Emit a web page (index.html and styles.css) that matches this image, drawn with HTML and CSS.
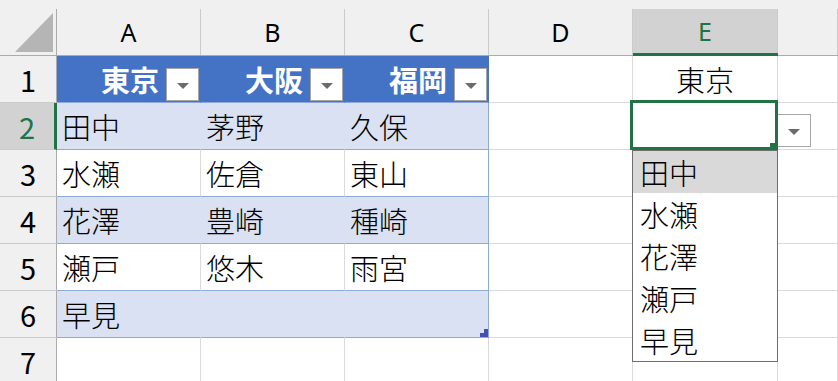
FILE: index.html
```html
<!DOCTYPE html>
<html lang="ja">
<head>
  <meta charset="UTF-8" />
  <title>入力規則 - ドロップダウン</title>
  <link rel="stylesheet" href="styles.css">
</head>
<body>
  <div class="sheet">
    <div class="grid">
      <!-- column headers -->
      <div class="corner">
        <div class="lbl">
          <svg class="corner-tri" width="56" height="46" viewBox="0 0 56 46">
            <polygon points="53,4 53,43 15,43" fill="#b5b5b5"/>
          </svg>
        </div>
      </div>
      <div class="col-head"><div class="lbl">A</div></div>
      <div class="col-head"><div class="lbl">B</div></div>
      <div class="col-head"><div class="lbl">C</div></div>
      <div class="col-head"><div class="lbl">D</div></div>
      <div class="col-head sel"><div class="lbl">E</div></div>
      <div class="col-head"><div class="lbl"></div></div>

      <!-- row 1 -->
      <div class="row-head">1</div>
      <div class="cell th"><span>東京</span><span class="filter"></span></div>
      <div class="cell th"><span>大阪</span><span class="filter"></span></div>
      <div class="cell th"><span>福岡</span><span class="filter"></span></div>
      <div class="cell"></div>
      <div class="cell center">東京</div>
      <div class="cell"></div>

      <!-- row 2 -->
      <div class="row-head sel">2</div>
      <div class="cell tbl band">田中</div>
      <div class="cell tbl band">茅野</div>
      <div class="cell tbl band edge">久保</div>
      <div class="cell"></div>
      <div class="cell"></div>
      <div class="cell"></div>

      <!-- row 3 -->
      <div class="row-head">3</div>
      <div class="cell tbl">水瀬</div>
      <div class="cell tbl">佐倉</div>
      <div class="cell tbl edge">東山</div>
      <div class="cell"></div>
      <div class="cell"></div>
      <div class="cell"></div>

      <!-- row 4 -->
      <div class="row-head">4</div>
      <div class="cell tbl band">花澤</div>
      <div class="cell tbl band">豊崎</div>
      <div class="cell tbl band edge">種崎</div>
      <div class="cell"></div>
      <div class="cell"></div>
      <div class="cell"></div>

      <!-- row 5 -->
      <div class="row-head">5</div>
      <div class="cell tbl">瀬戸</div>
      <div class="cell tbl">悠木</div>
      <div class="cell tbl edge">雨宮</div>
      <div class="cell"></div>
      <div class="cell"></div>
      <div class="cell"></div>

      <!-- row 6 -->
      <div class="row-head">6</div>
      <div class="cell tbl band">早見</div>
      <div class="cell tbl band"></div>
      <div class="cell tbl band edge last"></div>
      <div class="cell"></div>
      <div class="cell"></div>
      <div class="cell"></div>

      <!-- row 7 -->
      <div class="row-head">7</div>
      <div class="cell"></div>
      <div class="cell"></div>
      <div class="cell"></div>
      <div class="cell"></div>
      <div class="cell"></div>
      <div class="cell"></div>
    </div>

    <!-- data validation dropdown on E2 -->
    <div class="dv-btn"></div>
    <ul class="dv-list">
      <li class="hover">田中</li>
      <li>水瀬</li>
      <li>花澤</li>
      <li>瀬戸</li>
      <li>早見</li>
    </ul>
    <div class="active-cell"><span class="fill-handle"></span></div>
  </div>
</body>
</html>
```

FILE: styles.css
```css
:root {
  --head-bg: #f0f0f0;
  --head-sel: #d2d2d2;
  --head-line: #ababab;
  --head-sep: #cbcbcb;
  --grid: #dadada;
  --green: #217346;
  --tbl-head: #4472c4;
  --tbl-band: #d9e1f2;
  --tbl-line: #8eaadb;
}

body {
  margin: 0;
  background: #fff;
  font-family: "Noto Sans CJK JP", "Noto Sans", sans-serif;
  font-weight: 300;
  color: #000;
  overflow: hidden;
}

.sheet {
  position: relative;
  width: 838px;
  height: 381px;
  overflow: hidden;
}

.grid {
  display: grid;
  grid-template-columns: 57px 144px 144px 144px 144px 145px 1fr;
  grid-template-rows: 56px repeat(7, 47px);
}

.grid > div {
  box-sizing: border-box;
}

/* headers */
.corner,
.col-head {
  background: var(--head-bg);
  padding-top: 9px;
  border-bottom: 1px solid var(--head-line);
}

.corner .lbl,
.col-head .lbl {
  box-sizing: border-box;
  height: 100%;
  border-right: 1px solid var(--head-sep);
  display: flex;
  align-items: center;
  justify-content: center;
  font-family: "Noto Sans", sans-serif;
  font-weight: 400;
  font-size: 25px;
  color: #000;
}

.corner .lbl {
  border-right-color: var(--head-line);
}

.corner-tri {
  display: block;
}

.col-head.sel {
  border-bottom: 3px solid var(--green);
}

.col-head.sel .lbl {
  background: var(--head-sel);
  color: var(--green);
}

.row-head {
  background: var(--head-bg);
  border-right: 1px solid var(--head-line);
  border-bottom: 1px solid var(--head-sep);
  display: flex;
  align-items: center;
  justify-content: center;
  font-size: 29px;
  font-weight: 400;
  color: #000;
}

.row-head.sel {
  background: var(--head-sel);
  color: var(--green);
  border-right: 3px solid var(--green);
}

/* cells */
.cell {
  border-right: 1px solid var(--grid);
  border-bottom: 1px solid var(--grid);
  display: flex;
  align-items: center;
  padding: 0 5px;
  font-size: 29px;
  white-space: nowrap;
  position: relative;
}

.cell.center {
  justify-content: center;
}

.cell.tbl {
  border-bottom-color: var(--tbl-line);
}

.cell.band {
  background: var(--tbl-band);
  border-right-color: var(--tbl-band);
}

.cell.edge {
  border-right-color: var(--tbl-line);
}

.cell.th {
  background: var(--tbl-head);
  border-right-color: var(--tbl-head);
  border-bottom-color: var(--tbl-line);
  color: #fff;
  font-weight: 700;
  justify-content: flex-end;
  gap: 7px;
  padding: 0;
}

.filter {
  align-self: flex-end;
  margin: 0 1px 1px 0;
  width: 33px;
  height: 33px;
  box-sizing: border-box;
  border: 1px solid #a6a6a6;
  background: #fff;
  display: flex;
  align-items: center;
  justify-content: center;
}

.filter::after,
.dv-btn::after {
  content: "";
  border-left: 6.5px solid transparent;
  border-right: 6.5px solid transparent;
  border-top: 6px solid #6b6b6b;
  margin-top: 2px;
}

/* table resize handle */
.cell.last::after {
  content: "";
  position: absolute;
  right: 0;
  bottom: 0;
  width: 8px;
  height: 8px;
  background: #4152b0;
  clip-path: polygon(50% 0, 100% 0, 100% 100%, 0 100%, 0 50%, 50% 50%);
}

/* dropdown */
.dv-btn {
  position: absolute;
  left: 777px;
  top: 114px;
  width: 34px;
  height: 33px;
  box-sizing: border-box;
  border: 1px solid #a6a6a6;
  background: #fff;
  display: flex;
  align-items: center;
  justify-content: center;
}

.dv-list {
  position: absolute;
  left: 632px;
  top: 150px;
  width: 146px;
  height: 212px;
  box-sizing: border-box;
  margin: 0;
  padding: 0;
  list-style: none;
  background: #fff;
  border: 1px solid #6e6e6e;
}

.dv-list li {
  height: 42px;
  display: flex;
  align-items: center;
  padding-left: 7px;
  font-size: 29px;
}

.dv-list li.hover {
  background: #d9d9d9;
}

.active-cell {
  position: absolute;
  left: 630px;
  top: 100px;
  width: 148px;
  height: 50px;
  box-sizing: border-box;
  border: 3px solid var(--green);
}

.fill-handle {
  position: absolute;
  right: -2px;
  bottom: -3px;
  width: 7px;
  height: 7px;
  background: var(--green);
}
```
